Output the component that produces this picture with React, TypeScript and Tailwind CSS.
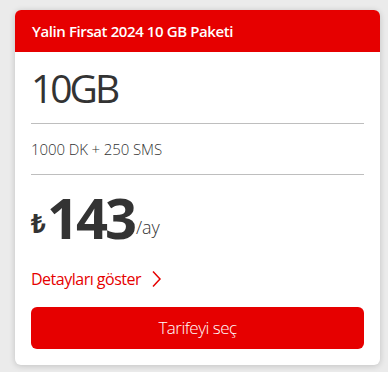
import React from 'react';

const font = { fontFamily: '"Open Sans", "Noto Sans", sans-serif' };

const App: React.FC = () => {
  return (
    <div className="min-h-[372px] w-[388px] bg-[#ebebeb] pt-[10px] pl-[15px]" style={font}>
      <div className="flex w-[365px] flex-col overflow-hidden rounded-md bg-white shadow-[0_1px_6px_rgba(0,0,0,0.18)]">
        {/* Header */}
        <div className="flex h-[42px] items-center bg-[#e60000] px-[17px]">
          <span className="text-[15px] font-semibold tracking-[-0.4px] text-white">Yalin Firsat 2024 10 GB Paketi</span>
        </div>

        <div className="flex flex-col px-4">
          <div className="flex h-[72px] items-center border-b border-[#bebebe]">
            <span className="text-[39px] leading-none tracking-[-3px] text-[#333]">10GB</span>
          </div>
          <div className="flex h-[51px] items-center border-b border-[#bebebe]">
            <span className="text-[15px] font-light tracking-[-0.1px] text-[#333]">1000 DK + 250 SMS</span>
          </div>

          {/* Price */}
          <div className="flex items-end pt-[14px] text-[#333]">
            <span className="mb-[9px] text-[26px] font-bold leading-none">₺</span>
            <span className="ml-[1px] text-[56px] font-bold leading-[56px] tracking-[-3px]">143</span>
            <span className="mb-[9px] ml-[2px] text-[18px] font-light leading-none">/ay</span>
          </div>

          <div className="mt-[22px] flex items-center gap-[10px] text-[#e60000]">
            <span className="text-[16px] tracking-[-0.5px]">Detayları göster</span>
            <svg width="11" height="18" viewBox="0 0 11 18" fill="none">
              <path d="M2 1.5 L9 9 L2 16.5" stroke="#e60000" strokeWidth="1.5" />
            </svg>
          </div>

          <button className="mt-[16px] mb-[16px] flex h-[42px] w-full items-center justify-center rounded-md bg-[#e60000] text-[17px] font-light tracking-[-0.5px] text-white">
            Tarifeyi seç
          </button>
        </div>
      </div>
    </div>
  );
};

export default App;
